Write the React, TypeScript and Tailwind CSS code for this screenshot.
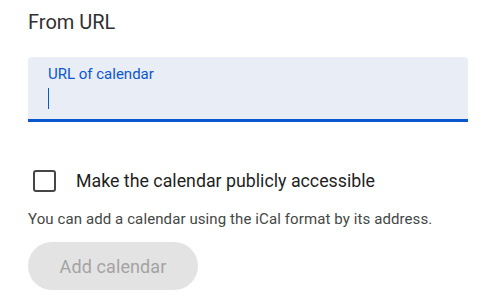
export default function App() {
  return (
    <div
      className="w-[482px] h-[300px] bg-white pl-[28px] pt-2"
      style={{ fontFamily: "Roboto, 'Liberation Sans', sans-serif" }}
    >
      {/* Section title */}
      <h2 className="text-[20px] leading-[28px] text-[#303030]">From URL</h2>

      {/* Filled text field, focused */}
      <div className="mt-[21px] w-[440px] h-[65px] rounded-t-[4px] bg-[#e9edf6] border-b-[3px] border-[#0b57d0] pl-[20px] pt-[7px]">
        <div className="text-[15px] leading-[20px] text-[#0b57d0]">URL of calendar</div>
        <div className="mt-[4px] w-px h-[21px] bg-[#0b57d0]" />
      </div>

      {/* Checkbox row */}
      <label className="mt-[47px] flex items-center h-[24px]">
        <span className="ml-[5px] w-[23px] h-[22px] rounded-[3px] border-2 border-[#444746]" />
        <span className="ml-[20px] text-[17.8px] leading-[24px] text-[#1f1f1f]">
          Make the calendar publicly accessible
        </span>
      </label>

      <p className="mt-[16px] text-[15px] leading-[20px] tracking-[0.1px] text-[#444746]">
        You can add a calendar using the iCal format by its address.
      </p>

      <button
        disabled
        className="mt-[13px] w-[170px] h-[48px] rounded-full bg-[#e3e3e3] text-[18px] tracking-[0.1px] text-[#a3a3a3] flex items-center justify-center"
      >
        Add calendar
      </button>
    </div>
  );
}
